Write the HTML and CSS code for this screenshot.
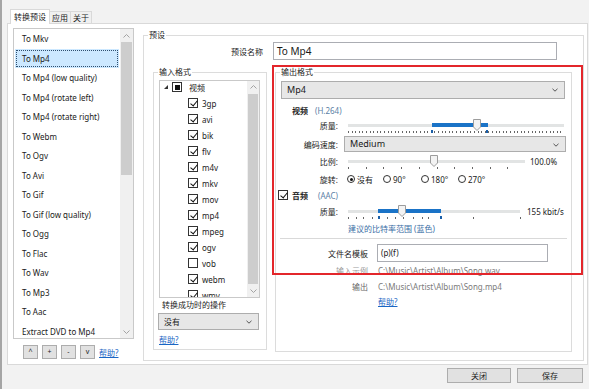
FILE: index.html
```html
<!DOCTYPE html>
<html lang="zh">
<head>
    <meta charset="UTF-8">
    <meta name="viewport" content="width=device-width, initial-scale=1.0">
    <title>转换预设</title>
    <link rel="stylesheet" href="styles.css">
</head>
<body>
<div class="window">
    <div class="tabs">
        <div class="tab active">转换预设</div>
        <div class="tab">应用</div>
        <div class="tab">关于</div>
    </div>

    <div class="tab-panel">
        <!-- preset list -->
        <div class="list-col">
            <div class="preset-list">
                <ul class="items">
                    <li>To Mkv</li>
                    <li class="selected">To Mp4</li>
                    <li>To Mp4 (low quality)</li>
                    <li>To Mp4 (rotate left)</li>
                    <li>To Mp4 (rotate right)</li>
                    <li>To Webm</li>
                    <li>To Ogv</li>
                    <li>To Avi</li>
                    <li>To Gif</li>
                    <li>To Gif (low quality)</li>
                    <li>To Ogg</li>
                    <li>To Flac</li>
                    <li>To Wav</li>
                    <li>To Mp3</li>
                    <li>To Aac</li>
                    <li>Extract DVD to Mp4</li>
                </ul>
                <div class="vscroll">
                    <span class="arrow"><svg width="7" height="4" viewBox="0 0 7 4"><polyline points="0.5,3.5 3.5,0.5 6.5,3.5" fill="none" stroke="#a3a3a3"/></svg></span>
                    <div class="thumb list-thumb"></div>
                    <div class="fill"></div>
                    <span class="arrow"><svg width="7" height="4" viewBox="0 0 7 4"><polyline points="0.5,0.5 3.5,3.5 6.5,0.5" fill="none" stroke="#a3a3a3"/></svg></span>
                </div>
            </div>
            <div class="list-buttons">
                <button class="small-btn">^</button>
                <button class="small-btn">+</button>
                <button class="small-btn">-</button>
                <button class="small-btn">v</button>
                <a class="link" href="#">帮助?</a>
            </div>
        </div>

        <!-- preset settings -->
        <div class="group preset-box">
            <span class="group-title">预设</span>
            <div class="name-row">
                <span class="name-label">预设名称</span>
                <div class="textbox big">To Mp4</div>
            </div>

            <div class="columns">
                <div class="group input-group">
                    <span class="group-title">输入格式</span>
                    <div class="tree">
                        <div class="tree-items">
                            <div class="tree-row root"><span class="expander"></span><span class="cb part"></span><span>视频</span></div>
                            <div class="tree-row"><span class="cb on"></span><span>3gp</span></div>
                            <div class="tree-row"><span class="cb on"></span><span>avi</span></div>
                            <div class="tree-row"><span class="cb on"></span><span>bik</span></div>
                            <div class="tree-row"><span class="cb on"></span><span>flv</span></div>
                            <div class="tree-row"><span class="cb on"></span><span>m4v</span></div>
                            <div class="tree-row"><span class="cb on"></span><span>mkv</span></div>
                            <div class="tree-row"><span class="cb on"></span><span>mov</span></div>
                            <div class="tree-row"><span class="cb on"></span><span>mp4</span></div>
                            <div class="tree-row"><span class="cb on"></span><span>mpeg</span></div>
                            <div class="tree-row"><span class="cb on"></span><span>ogv</span></div>
                            <div class="tree-row"><span class="cb"></span><span>vob</span></div>
                            <div class="tree-row"><span class="cb on"></span><span>webm</span></div>
                            <div class="tree-row"><span class="cb on"></span><span>wmv</span></div>
                        </div>
                        <div class="vscroll narrow">
                            <span class="arrow"><svg width="7" height="4" viewBox="0 0 7 4"><polyline points="0.5,3.5 3.5,0.5 6.5,3.5" fill="none" stroke="#a3a3a3"/></svg></span>
                            <div class="thumb tree-thumb"></div>
                            <div class="fill"></div>
                            <span class="arrow"><svg width="7" height="4" viewBox="0 0 7 4"><polyline points="0.5,0.5 3.5,3.5 6.5,0.5" fill="none" stroke="#a3a3a3"/></svg></span>
                        </div>
                    </div>
                    <div class="after-label">转换成功时的操作</div>
                    <div class="select after-select">没有<svg class="chev" width="6" height="4" viewBox="0 0 6 4"><polyline points="0.5,0.8 3,3.2 5.5,0.8" fill="none" stroke="#555"/></svg></div>
                    <a class="link input-help" href="#">帮助?</a>
                </div>

                <div class="group output-group">
                    <span class="group-title">输出格式</span>
                    <div class="select out-select">Mp4<svg class="chev" width="6" height="4" viewBox="0 0 6 4"><polyline points="0.5,0.8 3,3.2 5.5,0.8" fill="none" stroke="#555"/></svg></div>

                    <div class="section-head video-head"><b>视频</b><span class="codec">(H.264)</span></div>

                    <div class="row">
                        <span class="lbl">质量:</span>
                        <div class="slider quality">
                            <div class="track"></div>
                            <div class="range" style="left: 88px; width: 56px;"></div>
                            <div class="ticks dense"></div>
                            <span class="mark" style="left: 87px;"></span>
                            <span class="mark" style="left: 142px;"></span>
                            <svg class="knob" style="left: 129px;" width="8" height="12" viewBox="0 0 8 12"><polygon points="0.5,0.5 7.5,0.5 7.5,8 4,11.5 0.5,8" fill="#f3f3f3" stroke="#9c9c9c"/></svg>
                        </div>
                    </div>

                    <div class="row speed-row">
                        <span class="lbl">编码速度:</span>
                        <div class="select speed-select">Medium<svg class="chev" width="6" height="4" viewBox="0 0 6 4"><polyline points="0.5,0.8 3,3.2 5.5,0.8" fill="none" stroke="#555"/></svg></div>
                    </div>

                    <div class="row">
                        <span class="lbl">比例:</span>
                        <div class="slider ratio">
                            <div class="track"></div>
                            <div class="ticks sparse"></div>
                            <svg class="knob" style="left: 86px;" width="8" height="12" viewBox="0 0 8 12"><polygon points="0.5,0.5 7.5,0.5 7.5,8 4,11.5 0.5,8" fill="#f3f3f3" stroke="#9c9c9c"/></svg>
                        </div>
                        <span class="value">100.0%</span>
                    </div>

                    <div class="row rotate-row">
                        <span class="lbl">旋转:</span>
                        <div class="radios">
                            <span class="opt"><span class="radio on"></span>没有</span>
                            <span class="opt"><span class="radio"></span>90°</span>
                            <span class="opt"><span class="radio"></span>180°</span>
                            <span class="opt"><span class="radio"></span>270°</span>
                        </div>
                    </div>

                    <div class="section-head audio-head"><span class="cb on"></span><b>音频</b><span class="codec">(AAC)</span></div>

                    <div class="row">
                        <span class="lbl">质量:</span>
                        <div class="slider audio">
                            <div class="track"></div>
                            <div class="range" style="left: 34px; width: 63px;"></div>
                            <span class="tick" style="left: 4px;"></span>
                            <span class="tick" style="left: 12px;"></span>
                            <span class="tick" style="left: 19px;"></span>
                            <span class="tick" style="left: 28px;"></span>
                            <span class="mark" style="left: 34px;"></span>
                            <span class="tick" style="left: 43px;"></span>
                            <span class="tick" style="left: 51px;"></span>
                            <span class="tick" style="left: 59px;"></span>
                            <span class="tick" style="left: 69px;"></span>
                            <span class="tick" style="left: 78px;"></span>
                            <span class="tick" style="left: 84px;"></span>
                            <span class="mark" style="left: 96px;"></span>
                            <span class="tick" style="left: 129px;"></span>
                            <span class="tick" style="left: 176px;"></span>
                            <svg class="knob" style="left: 54px;" width="8" height="12" viewBox="0 0 8 12"><polygon points="0.5,0.5 7.5,0.5 7.5,8 4,11.5 0.5,8" fill="#f3f3f3" stroke="#9c9c9c"/></svg>
                        </div>
                        <span class="value clip">155 kbit/s</span>
                    </div>

                    <div class="hint">建议的比特率范围 (蓝色)</div>
                    <div class="separator"></div>

                    <div class="file-row">
                        <span class="file-label">文件名模板</span>
                        <div class="textbox template">(p)(f)</div>
                    </div>
                    <div class="example-row">
                        <span class="file-label faint">输入示例</span>
                        <span class="path faint">C:\Music\Artist\Album\Song.wav</span>
                    </div>
                    <div class="example-row">
                        <span class="file-label gray">输出</span>
                        <span class="path">C:\Music\Artist\Album\Song.mp4</span>
                    </div>
                    <div class="example-row help-row">
                        <a class="link" href="#">帮助?</a>
                    </div>
                </div>
            </div>
        </div>
    </div>

    <div class="dialog-buttons">
        <button class="btn close-btn">关闭</button>
        <button class="btn save-btn">保存</button>
    </div>

    <div class="annotation"></div>
</div>
</body>
</html>
```

FILE: styles.css
```css
* {
    box-sizing: border-box;
}
body {
    margin: 0;
    background: #f2f2f2;
    font-family: "Noto Sans", "Noto Sans CJK SC", sans-serif;
    font-size: 8px;
    color: #1a1a1a;
}
.window {
    position: relative;
    width: 589px;
    height: 389px;
    padding: 9px 0 0 5px;
    border-left: 2px solid #a5a5a5;
    overflow: hidden;
}

/* tabs */
.tabs {
    display: flex;
    align-items: flex-end;
    height: 14px;
    margin-left: 3px;
}
.tab {
    height: 12px;
    padding: 0 2px;
    margin-right: -1px;
    border: 1px solid #d9d9d9;
    border-bottom: none;
    background: #f0f0f0;
    line-height: 11px;
}
.tab.active {
    height: 15px;
    padding: 0 3px;
    margin-bottom: -1px;
    background: #fff;
    position: relative;
    z-index: 1;
    line-height: 13px;
}
.tab-panel {
    display: flex;
    width: 581px;
    height: 342px;
    padding: 4px 0 0 5px;
    border: 1px solid #d9d9d9;
    background: #fff;
}

/* preset list */
.list-col {
    width: 121px;
}
.preset-list {
    display: flex;
    height: 311px;
    border: 1px solid #c9c9c9;
}
.items {
    flex: 1;
    list-style: none;
    margin: 0;
    padding: 0 1px 0 1px;
}
.items li {
    height: 19.5px;
    line-height: 19.5px;
    padding-left: 7px;
    white-space: nowrap;
}
.items li.selected {
    background: #cce8ff;
    outline: 1px dotted #2f4f6f;
    outline-offset: -2px;
}
.vscroll {
    display: flex;
    flex-direction: column;
    width: 13px;
    background: #f0f0f0;
}
.vscroll.narrow {
    width: 12px;
}
.arrow {
    display: flex;
    align-items: center;
    justify-content: center;
    height: 13px;
}
.thumb {
    margin: 0 1px;
    background: #cdcdcd;
}
.list-thumb {
    height: 133px;
}
.tree-thumb {
    height: 195px;
}
.fill {
    flex: 1;
}
.list-buttons {
    display: flex;
    align-items: center;
    gap: 4px;
    height: 14px;
    margin-top: 6px;
    padding-left: 10px;
}
.small-btn {
    width: 15px;
    height: 14px;
    padding: 0;
    border: 1px solid #adadad;
    background: #e1e1e1;
    font: inherit;
    font-size: 7px;
    line-height: 12px;
    color: #222;
}
.link {
    color: #1a66c4;
    text-decoration: underline;
}

/* group boxes */
.group {
    position: relative;
    border: 1px solid #dcdcdc;
}
.group-title {
    position: absolute;
    top: -7px;
    left: 4px;
    padding: 0 1px;
    background: #fff;
    line-height: 12px;
}
.preset-box {
    width: 441px;
    height: 326px;
    margin: 7px 0 0 9px;
    padding: 6px 0 0 9px;
}
.name-row {
    display: flex;
    align-items: center;
    height: 18px;
}
.name-label {
    width: 110px;
    margin-right: 10px;
    text-align: right;
}
.textbox {
    height: 18px;
    padding-left: 3px;
    border: 1px solid #abadb3;
    background: #fff;
    line-height: 16px;
    white-space: nowrap;
}
.textbox.big {
    width: 284px;
    font-size: 10px;
}
.columns {
    display: flex;
    gap: 8px;
    margin-top: 12px;
}

/* input formats */
.input-group {
    width: 114px;
    height: 278px;
    padding: 7px 0 0 5px;
}
.tree {
    display: flex;
    width: 101px;
    height: 218px;
    border: 1px solid #c9c9c9;
    overflow: hidden;
}
.tree-items {
    flex: 1;
    margin-top: -2px;
}
.tree-row {
    display: flex;
    align-items: center;
    gap: 4px;
    height: 16px;
    padding-left: 28px;
}
.tree-row.root {
    padding-left: 4px;
}
.tree-row.root .cb {
    margin-right: 3px;
}
.expander {
    width: 0;
    height: 0;
    margin-right: 0;
    border-left: 4px solid transparent;
    border-bottom: 4px solid #333;
}
.cb {
    position: relative;
    flex: none;
    width: 10px;
    height: 10px;
    border: 1px solid #333;
    background: #fff;
}
.cb.on::after {
    content: "";
    position: absolute;
    left: 2.5px;
    top: 0;
    width: 3px;
    height: 6px;
    border: solid #111;
    border-width: 0 1.4px 1.4px 0;
    transform: rotate(40deg);
}
.cb.part::after {
    content: "";
    position: absolute;
    inset: 1.5px;
    background: #111;
}
.after-label {
    height: 12px;
    margin-top: 1px;
    padding-left: 3px;
    line-height: 12px;
}
.select {
    position: relative;
    height: 17px;
    padding-left: 5px;
    border: 1px solid #adadad;
    background: #e7e7e7;
    line-height: 15px;
}
.chev {
    position: absolute;
    right: 6px;
    top: 6px;
}
.after-select {
    width: 101px;
    margin: 2px 0 0 -1px;
}
.input-help {
    display: block;
    margin-top: 4px;
    line-height: 12px;
}

/* output format */
.output-group {
    width: 297px;
    height: 280px;
}
.out-select {
    width: 284px;
    height: 18px;
    margin: 8px 0 0 5px;
    line-height: 16px;
    font-size: 9px;
}
.section-head {
    display: flex;
    align-items: center;
    height: 11px;
}
.section-head b {
    font-weight: 700;
}
.codec {
    margin-left: 7px;
    color: #5b7fa6;
}
.video-head {
    margin-top: 6px;
    padding-left: 16px;
}
.audio-head {
    height: 14px;
    padding-left: 2px;
    gap: 4px;
}
.audio-head .codec {
    margin-left: 6px;
}
.row {
    display: flex;
    align-items: center;
    height: 18px;
}
.lbl {
    width: 62px;
    margin-right: 6px;
    text-align: right;
    white-space: nowrap;
}
.slider {
    position: relative;
    height: 18px;
}
.slider.quality {
    width: 224px;
}
.slider.ratio {
    width: 185px;
}
.slider.audio {
    width: 180px;
}
.track {
    position: absolute;
    left: 4px;
    right: 4px;
    top: 8px;
    height: 3px;
    background: #e2e4e4;
}
.range {
    position: absolute;
    top: 7px;
    height: 4px;
    background: #1a73c7;
}
.knob {
    position: absolute;
    top: 3px;
}
.ticks {
    position: absolute;
    left: 4px;
    right: 4px;
    top: 15px;
    height: 2px;
}
.ticks.dense {
    background: repeating-linear-gradient(to right, #666 0 1px, transparent 1px 3.6px);
}
.ticks.sparse {
    background: repeating-linear-gradient(to right, #666 0 1px, transparent 1px 17.7px);
}
.tick {
    position: absolute;
    top: 15px;
    width: 1px;
    height: 2px;
    background: #666;
}
.mark {
    position: absolute;
    top: 14px;
    width: 2px;
    height: 3px;
    background: #1a5fa8;
}
.value {
    margin-left: 1px;
    white-space: nowrap;
}
.value.clip {
    width: 38px;
    margin-left: 3px;
    overflow: hidden;
}
.speed-row {
    height: 16px;
    margin-top: 2px;
}
.speed-select {
    width: 222px;
    height: 16px;
    line-height: 14px;
    font-size: 9px;
}
.rotate-row {
    height: 18px;
}
.radios {
    display: grid;
    grid-template-columns: 36px 38px 37px auto;
    padding-left: 3px;
}
.opt {
    display: flex;
    align-items: center;
    gap: 2px;
}
.radio {
    position: relative;
    width: 8px;
    height: 8px;
    border: 1px solid #333;
    border-radius: 50%;
    background: #fff;
}
.radio.on::after {
    content: "";
    position: absolute;
    inset: 1.5px;
    border-radius: 50%;
    background: #111;
}
.hint {
    height: 17px;
    padding-left: 72px;
    line-height: 17px;
    color: #3a6ea5;
}
.separator {
    height: 1px;
    margin: 1px 4px 0 4px;
    background: #d9d9d9;
}
.file-row {
    display: flex;
    align-items: center;
    height: 18px;
    margin-top: 5px;
}
.file-label {
    width: 92px;
    margin-right: 9px;
    text-align: right;
}
.textbox.template {
    width: 171px;
}
.example-row {
    display: flex;
    align-items: center;
    height: 16px;
}
.example-row .file-label {
    margin-right: 10px;
}
.faint {
    color: #9a9a9a;
}
.gray {
    color: #666;
}
.path {
    color: #7a7a7a;
}
.help-row {
    height: 14px;
    padding-left: 102px;
}

/* bottom buttons */
.dialog-buttons {
    display: flex;
    justify-content: flex-end;
    gap: 6px;
    margin-top: 3px;
    padding-right: 6px;
}
.btn {
    height: 15px;
    padding: 0;
    border: 1px solid #adadad;
    background: #e1e1e1;
    font: inherit;
    line-height: 13px;
    color: #1a1a1a;
}
.close-btn {
    width: 64px;
}
.save-btn {
    width: 66px;
}

/* red marker drawn over the output box */
.annotation {
    position: absolute;
    left: 270px;
    top: 65px;
    width: 311px;
    height: 210px;
    border: 2px solid #e3262b;
    pointer-events: none;
}
```
